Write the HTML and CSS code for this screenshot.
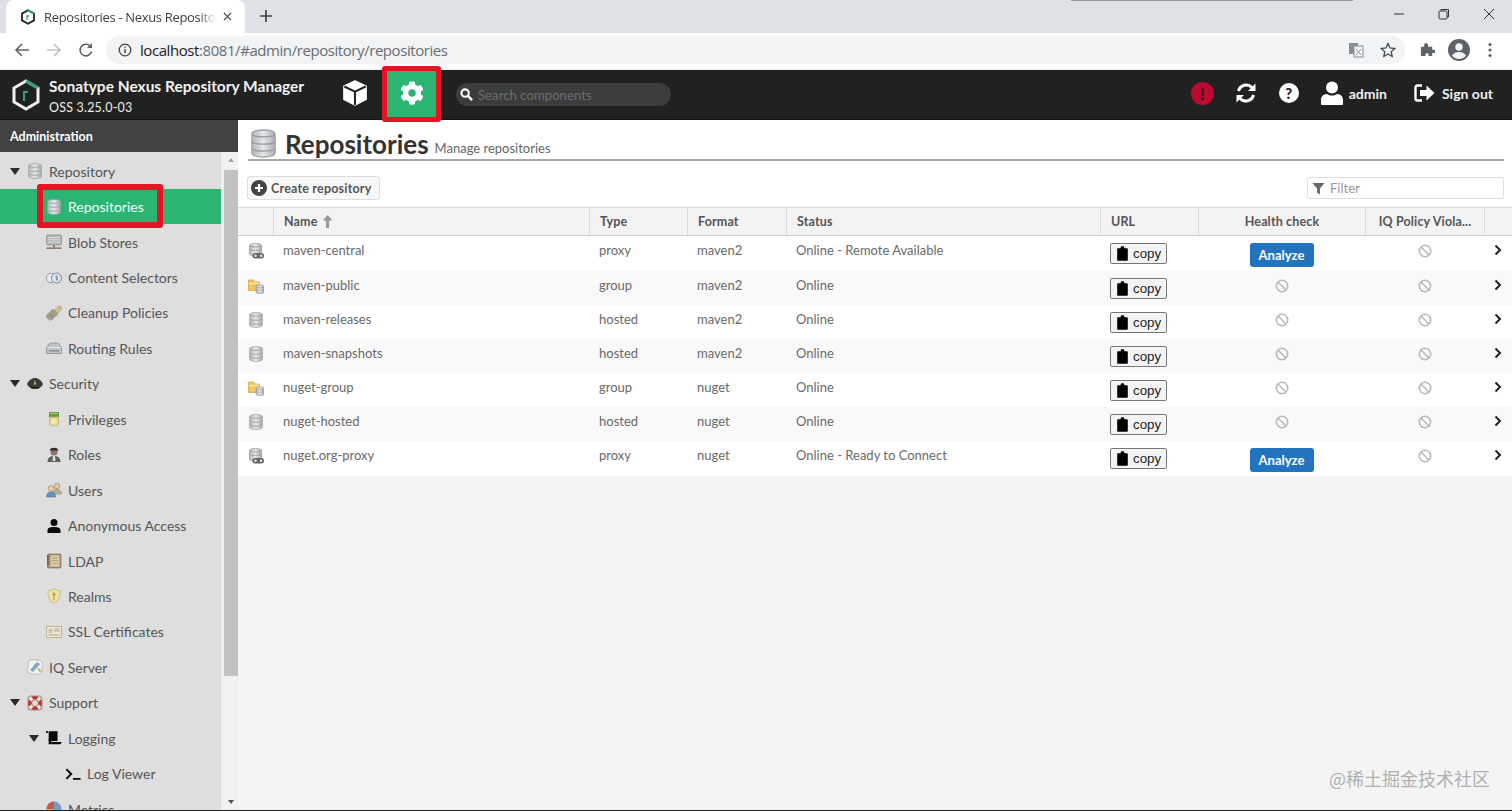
FILE: index.html
```html
<!DOCTYPE html>
<html lang="en">
<head>
<meta charset="utf-8">
<title>Repositories - Nexus Repository Manager</title>
<link rel="stylesheet" href="styles.css">
</head>
<body>
<svg class="defs" aria-hidden="true">
  <defs>
    <linearGradient id="gdb" x1="0" x2="1" y1="0" y2="0"><stop offset="0" stop-color="#b4b8ba"/><stop offset=".5" stop-color="#e4e6e7"/><stop offset="1" stop-color="#a9adb0"/></linearGradient>
    <symbol id="i-db" viewBox="1.5 .5 13 15"><path d="M2 3.2C2 1.6 5 1 8 1s6 .6 6 2.2v9.600C14 14.400 11 15 8 15s-6-.6-6-2.200z" fill="url(#gdb)" stroke="#a0a4a6" stroke-width=".7"/><path d="M2 3.200C3 5 13 5 14 3.200M2 7c1 1.800 11 1.800 12 0M2 10.600c1 1.800 11 1.800 12 0" fill="none" stroke="#979b9e" stroke-width=".7"/></symbol>
    <symbol id="i-proxy" viewBox="0 0 16 16"><path d="M1.500 2.600C1.500 1.300 4.500.4 7.500.4s6 .9 6 2.200V11c0 1.300-3 2.200-6 2.200s-6-.9-6-2.200z" fill="url(#gdb)" stroke="#8f9396" stroke-width=".7"/><path d="M1.500 2.800c1 1.500 11 1.500 12 0M1.500 6.300c1 1.500 11 1.500 12 0" fill="none" stroke="#8f9396" stroke-width=".7"/><rect x="4.500" y="10" width="11.500" height="5.500" rx="2.700" fill="#63666a"/><circle cx="7.500" cy="12.700" r="1.300" fill="#ddd"/><circle cx="13" cy="12.700" r="1.300" fill="#ddd"/></symbol>
    <symbol id="i-group" viewBox="0 0 16 16"><path d="M.5 2V12.500h11V4H6.500L5.500 2z" fill="#f0c75e" stroke="#d0a23a" stroke-width=".7"/><path d="M1 5.500h10" stroke="#fbe9ae" stroke-width="1.500"/><path d="M8 8.500C8 7.500 9.500 7 12 7s4 .5 4 1.500v5.500c0 1-1.500 1.500-4 1.500s-4-.5-4-1.500z" fill="url(#gdb)" stroke="#8f9396" stroke-width=".6"/><path d="M8 9c1 1 7 1 8 0M8 11.500c1 1 7 1 8 0" fill="none" stroke="#8f9396" stroke-width=".5"/></symbol>
    <symbol id="i-blob" viewBox="0 0 16 16"><rect x=".5" y="1" width="15" height="10" rx="1.500" fill="#b5b8ba" stroke="#85888a" stroke-width=".7"/><path d="M2 3.500h12M2 5.700h12M2 8h12" stroke="#e3e5e6" stroke-width=".8"/><path d="M8 11v2.500" stroke="#666" stroke-width="1.500"/><path d="M.5 14.200h15" stroke="#8a7b55" stroke-width="1.500"/></symbol>
    <symbol id="i-sel" viewBox="0 0 16 16"><circle cx="5" cy="8" r="4.700" fill="#e9e9e9" stroke="#9a9a9a"/><circle cx="10.500" cy="8" r="5" fill="#dde4ec" stroke="#7d8a99"/><path d="M9.500 5.500h2.200l.4 5H10z" fill="#8a9bb0"/></symbol>
    <symbol id="i-brush" viewBox="0 0 16 16"><path d="M.5 10.500 7 4l5 5-6.500 6C3 15.500.5 13.500.5 10.500z" fill="#a79f8a" stroke="#807a68" stroke-width=".5"/><path d="M2.500 12 6 8.500M4.500 13.500 8 10" stroke="#7f7a68" stroke-width=".7"/><path d="M9 5l4-4.500 3 2.500-3.500 5z" fill="#d2bd8f" stroke="#9a8a66" stroke-width=".5"/></symbol>
    <symbol id="i-route" viewBox="0 0 16 16"><path d="M2.500 5C3 3.500 4.500 3 8 3s5 .5 5.500 2L15.500 7.500v6H.5v-6z" fill="#bfc4c7" stroke="#85898c" stroke-width=".8"/><path d="M1 7.500h14" stroke="#e6e8e9"/><path d="M3 10.800h10" stroke="#7d8184" stroke-width="1.200"/></symbol>
    <symbol id="i-sec" viewBox="0 0 16 16"><path d="M0 8C1.500 4.200 5 2 8 2s6.500 2.200 8 6c-1 2.800-4 5-8 5s-7-2.200-8-5z" fill="#3d3d36"/><path d="M8 4l1.200 4.500H6.800z" fill="#d6bd6c"/><path d="M3 11h10l-1.500 1.500h-7z" fill="#1f1f1c"/></symbol>
    <symbol id="i-medal" viewBox="0 0 16 16"><path d="M3 1h10v5H3z" fill="#6c9a3f"/><path d="M4 2.500h8" stroke="#a9c77f"/><path d="M3.500 6h9v6.500C12.500 14 10.500 15 8 15s-4.500-1-4.500-2.500z" fill="#e2d38f" stroke="#bca95f" stroke-width=".6"/><circle cx="8" cy="10.500" r="2.800" fill="#f1e7b5"/></symbol>
    <symbol id="i-officer" viewBox="0 0 16 16"><circle cx="8" cy="5" r="3.500" fill="#8c7464"/><path d="M3.500 3.500C4 1.500 6 .8 8 .8s4 .7 4.500 2.700z" fill="#30302e"/><path d="M1.500 15c0-4 2.500-6 6.500-6s6.500 2 6.500 6z" fill="#5c5e60"/><path d="M7 9h2l.5 5h-3z" fill="#e0e0e0"/></symbol>
    <symbol id="i-users" viewBox="0 0 16 16"><circle cx="11" cy="4" r="2.800" fill="#e9c9a5" stroke="#8e7a60" stroke-width=".6"/><path d="M7 12c0-3 1.500-4.500 4-4.500s4.500 1.500 4.500 4.500z" fill="#b7b28c" stroke="#7d7a60" stroke-width=".5"/><circle cx="5" cy="6.500" r="2.800" fill="#eed0ad" stroke="#8e7a60" stroke-width=".6"/><path d="M.5 15c0-3.500 1.500-5 4.500-5s4.500 1.500 4.500 5z" fill="#5f8fc9" stroke="#3e6898" stroke-width=".5"/></symbol>
    <symbol id="i-person" viewBox="0 0 16 16"><circle cx="8" cy="4.500" r="3.500" fill="#0a0a0a"/><path d="M1.500 15v-2.500C1.500 10 3.500 9 8 9s6.500 1 6.500 3.500V15z" fill="#0a0a0a"/></symbol>
    <symbol id="i-book" viewBox="0 0 16 16"><rect x="1.500" y="1" width="13.500" height="14" rx="1" fill="#a98f6c" stroke="#75613f" stroke-width=".6"/><rect x="4.500" y="2.200" width="9" height="11.600" fill="#d9c9a8"/><path d="M6 5h6M6 7.500h6M6 10h6" stroke="#a8926f" stroke-width=".7"/><path d="M1 3.500h2M1 6h2M1 8.500h2M1 11h2" stroke="#4a3d28"/></symbol>
    <symbol id="i-shield" viewBox="0 0 16 16"><path d="M8 .8c2 1.500 4 2 6 2 0 6-1 10-6 12.400C3 12.800 2 8.800 2 2.800c2 0 4-.5 6-2z" fill="#efe2a8" stroke="#c4ad62" stroke-width=".7"/><path d="M8 4v8M6 6.500h4" stroke="#b89a3f" stroke-width="1.200"/></symbol>
    <symbol id="i-cert" viewBox="0 0 16 16"><rect x=".5" y="2.500" width="15" height="11" fill="#efe6d0" stroke="#b5a78b" stroke-width=".8"/><rect x="2.500" y="5" width="4" height="4" fill="#c9c3b0"/><path d="M8 5h5.500M8 7h5.500M2.500 11h11" stroke="#8f8a7d" stroke-width=".7"/></symbol>
    <symbol id="i-iq" viewBox="0 0 16 16"><rect x="1" y="1" width="14" height="14" rx="3" transform="rotate(8 8 8)" fill="#f0f0f0" stroke="#aaa" stroke-width=".6"/><path d="M3 11 10 3l3 2-7 8z" fill="#7fa7c8"/><path d="M11 9l2.500 4" stroke="#d1aa3d" stroke-width="1.500"/></symbol>
    <symbol id="i-buoy" viewBox="0 0 16 16"><rect x=".3" y=".3" width="15.400" height="15.400" rx="3.500" fill="#b5aaa2"/><circle cx="8" cy="8" r="7" fill="#c23b32"/><path d="M2.900 2.900 5.700 5.700M13.100 2.900 10.300 5.700M2.900 13.100 5.700 10.300M13.100 13.100 10.300 10.300" stroke="#f6f2ec" stroke-width="3"/><circle cx="8" cy="8" r="3.400" fill="#dedede" stroke="#a8322a" stroke-width=".6"/></symbol>
    <symbol id="i-scroll" viewBox="0 0 18 16"><path d="M0 0h2v2.500H0zM3 .5h10v11H3z" fill="#0a0a0a"/><path d="M6 12.500h11.500c0 1.500-.8 2.500-2 2.500H6z" fill="#0a0a0a"/><path d="M3 9h3v6H3z" fill="#0a0a0a"/></symbol>
    <symbol id="i-term" viewBox="0 0 18 14"><path d="M1.500 1.500 7 7l-5.500 5.500" fill="none" stroke="#0a0a0a" stroke-width="2.200"/><path d="M9 12.500h8.500" stroke="#0a0a0a" stroke-width="2"/></symbol>
    <symbol id="i-pie" viewBox="0 0 16 16"><circle cx="8" cy="8" r="7.500" fill="#6f9fc6"/><path d="M8 8V.5A7.500 7.500 0 0 0 .5 8z" fill="#c9594c"/><path d="M8 8H.5A7.500 7.500 0 0 0 8 15.500z" fill="#d2b04c"/></symbol>
    <symbol id="i-clip" viewBox="0 0 11 15"><path d="M1.200 2.200h2.500V1.400C3.700.7 4.300.2 5.500.2s1.800.5 1.800 1.200v.8h2.500c.6 0 1 .4 1 1v10.600c0 .6-.4 1-1 1H1.200c-.6 0-1-.4-1-1V3.200c0-.6.4-1 1-1z" fill="#000"/></symbol>
    <symbol id="i-ban" viewBox="0 0 14 14"><circle cx="7" cy="7" r="5.700" fill="none" stroke="#b9b9b9" stroke-width="1.600"/><path d="M3 3l8 8" stroke="#b9b9b9" stroke-width="1.600"/></symbol>
    <symbol id="i-chev" viewBox="0 0 8 12"><path d="M1.500 1.500 6 6l-4.500 4.500" fill="none" stroke="#222" stroke-width="2"/></symbol>
  </defs>
</svg>

<div class="browser-tabs">
  <div class="tab">
    <svg class="fav" viewBox="0 0 16 16"><path d="M8 1.200 14 4.600v6.800L8 14.800 2 11.400V4.600z" fill="none" stroke="#222" stroke-width="1.800"/><path d="M8 1.200 14 4.600" fill="none" stroke="#2aa874" stroke-width="1.800"/><path d="M7 11V7h2" fill="none" stroke="#2aa874" stroke-width="1.300"/></svg>
    <span class="tab-title">Repositories - Nexus Repository Manager</span>
    <svg class="tab-x" viewBox="0 0 10 10"><path d="M1 1l8 8M9 1l-8 8" stroke="#444" stroke-width="1.400"/></svg>
  </div>
  <svg class="new-tab" viewBox="0 0 12 12"><path d="M6 0v12M0 6h12" stroke="#3c4043" stroke-width="1.700"/></svg>
  <div class="win-ctrl">
    <svg class="win-btn" viewBox="0 0 12 12"><path d="M1 6h10" stroke="#333" stroke-width="1"/></svg>
    <svg class="win-btn" viewBox="0 0 12 12"><rect x="1" y="3" width="8" height="8" rx="1" fill="none" stroke="#333"/><path d="M3 3V1.500h7.500V9H9" fill="none" stroke="#333"/></svg>
    <svg class="win-btn" viewBox="0 0 12 12"><path d="M1 1l10 10M11 1L1 11" stroke="#333" stroke-width="1"/></svg>
  </div>
</div>

<div class="browser-bar">
  <svg class="nav-ico" viewBox="0 0 16 16"><path d="M15 8H2M8 2 2 8l6 6" fill="none" stroke="#5f6368" stroke-width="1.600"/></svg>
  <svg class="nav-ico" viewBox="0 0 16 16"><path d="M1 8h13M8 2l6 6-6 6" fill="none" stroke="#c0c2c5" stroke-width="1.600"/></svg>
  <svg class="nav-ico" viewBox="0 0 16 16"><path d="M13.500 9.500A5.800 5.800 0 1 1 12 4" fill="none" stroke="#5f6368" stroke-width="1.600"/><path d="M14 1v5H9z" fill="#5f6368"/></svg>
  <div class="omnibox">
    <svg class="info" viewBox="0 0 14 14"><circle cx="7" cy="7" r="5.800" fill="none" stroke="#444" stroke-width="1.300"/><path d="M7 6v4.200M7 3.500v1.300" stroke="#444" stroke-width="1.400"/></svg>
    <span class="url"><span class="url-host">localhost</span>:8081/#admin/repository/repositories</span>
    <svg class="omni-ico" viewBox="0 0 16 16"><rect x="1" y="1" width="9" height="11" fill="#8b8f93"/><rect x="6" y="4" width="9" height="11" fill="#f1f3f4" stroke="#8b8f93"/><path d="M8 7l5 6M13 7l-5 6" stroke="#9a9ea2"/></svg>
    <svg class="omni-ico star" viewBox="0 0 16 16"><path d="M8 1.500 10 6l4.800.5-3.600 3.200 1 4.800L8 12 3.800 14.500l1-4.800L1.200 6.500 6 6z" fill="none" stroke="#4a4d50" stroke-width="1.300"/></svg>
  </div>
  <svg class="bar-ico" viewBox="0 0 16 16"><path d="M1 5h3.500C4 2.500 5 1 6.500 1S9 2.500 8.500 5H13v3.500c2.500-.5 3-.2 3 1.500s-.5 2-3 1.500V15H9c.5-2 0-3-1.500-3S5.500 13 6 15H1z" fill="#5f6368"/></svg>
  <svg class="avatar" viewBox="0 0 22 22"><circle cx="11" cy="11" r="11" fill="#5f6368"/><circle cx="11" cy="8" r="3.700" fill="#f1f3f4"/><path d="M4 16.500c1.500-2.500 4-3.500 7-3.500s5.500 1 7 3.500C16.500 18.500 14 20 11 20s-5.500-1.500-7-3.500z" fill="#f1f3f4"/></svg>
  <svg class="dots" viewBox="0 0 4 16"><circle cx="2" cy="2.500" r="1.600" fill="#5f6368"/><circle cx="2" cy="8" r="1.600" fill="#5f6368"/><circle cx="2" cy="13.500" r="1.600" fill="#5f6368"/></svg>
</div>

<header class="topbar">
  <svg class="logo" viewBox="0 0 28 32"><path d="M14 2 26 9v14l-12 7L2 23V9z" fill="none" stroke="#f2f2f2" stroke-width="3"/><path d="M14 2 26 9" fill="none" stroke="#2aa874" stroke-width="3"/><path d="M12 22v-9h4" fill="none" stroke="#2aa874" stroke-width="2"/></svg>
  <div class="brand">
    <div class="brand-name">Sonatype Nexus Repository Manager</div>
    <div class="brand-ver">OSS 3.25.0-03</div>
  </div>
  <svg class="cube" viewBox="0 0 26 28"><path d="M13 1 25 6.500V21L13 27 1 21V6.500z" fill="#fff" stroke="#fff" stroke-linejoin="round" stroke-width="1.500"/><path d="M1.500 7 13 12.500 24.500 7M13 12.500V27" fill="none" stroke="#222" stroke-width="2.200"/></svg>
  <div class="admin-btn">
    <svg class="gear" viewBox="0 0 512 512"><path fill="#fff" d="M487.4 315.7l-42.6-24.6c4.300-23.200 4.300-47 0-70.200l42.600-24.600c4.900-2.800 7.100-8.600 5.500-14-11.100-35.600-30-67.800-54.700-94.600-3.800-4.100-10-5.100-14.800-2.300L380.800 110c-17.900-15.400-38.500-27.300-60.800-35.100V25.800c0-5.600-3.900-10.500-9.400-11.700-36.700-8.200-74.300-7.800-109.200 0-5.500 1.200-9.400 6.100-9.400 11.700V75c-22.200 7.900-42.800 19.800-60.800 35.100L88.700 85.500c-4.900-2.800-11-1.900-14.800 2.300-24.700 26.700-43.600 58.900-54.700 94.600-1.700 5.400.6 11.200 5.500 14L67.300 221c-4.300 23.200-4.300 47 0 70.200l-42.600 24.600c-4.900 2.800-7.100 8.600-5.500 14 11.100 35.600 30 67.800 54.700 94.600 3.800 4.100 10 5.100 14.800 2.300l42.600-24.600c17.900 15.400 38.500 27.300 60.800 35.100v49.200c0 5.600 3.900 10.500 9.400 11.700 36.700 8.200 74.300 7.800 109.200 0 5.500-1.200 9.400-6.100 9.400-11.700v-49.200c22.200-7.900 42.800-19.800 60.800-35.100l42.600 24.600c4.900 2.800 11 1.900 14.800-2.300 24.700-26.700 43.600-58.900 54.700-94.600 1.500-5.500-.7-11.300-5.600-14.100zM256 336c-44.100 0-80-35.900-80-80s35.900-80 80-80 80 35.900 80 80-35.900 80-80 80z"/></svg>
  </div>
  <div class="search">
    <svg class="search-ico" viewBox="0 0 14 14"><circle cx="5.500" cy="5.500" r="4" fill="none" stroke="#fff" stroke-width="2.200"/><path d="M8.500 8.500 13 13" stroke="#fff" stroke-width="2.600"/></svg>
    <span class="search-ph">Search components</span>
  </div>
  <div class="top-right">
    <span class="alert">!</span>
    <svg class="refresh" viewBox="0 0 22 22"><path d="M3.500 9A8 8 0 0 1 17 5.500" fill="none" stroke="#fff" stroke-width="3"/><path d="M20.500 1.500V9h-7.500z" fill="#fff"/><path d="M18.500 13A8 8 0 0 1 5 16.500" fill="none" stroke="#fff" stroke-width="3"/><path d="M1.500 20.500V13H9z" fill="#fff"/></svg>
    <span class="help">?</span>
    <svg class="user-ico" viewBox="0 0 22 24"><circle cx="11" cy="6.500" r="6" fill="#fff"/><path d="M0 23v-4c0-4 3-6 6-6 1.500 1 3 1.500 5 1.500s3.500-.5 5-1.500c3 0 6 2 6 6v4c0 .5-.5 1-1 1H1c-.5 0-1-.5-1-1z" fill="#fff"/></svg>
    <span class="top-text user-name">admin</span>
    <svg class="out-ico" viewBox="0 0 21 18"><path d="M8 1.500H3.500C2.300 1.500 1.500 2.300 1.500 3.500v11c0 1.200.8 2 2 2H8" fill="none" stroke="#fff" stroke-width="2.400"/><path d="M6 6h6.500V1.500L20.500 9l-8 7.500V12H6z" fill="#fff"/></svg>
    <span class="top-text">Sign out</span>
  </div>
</header>

<div class="workspace">
  <aside class="sidebar">
    <div class="side-head">Administration</div>
    <div class="side-body">
      <nav class="tree">
        <div class="node lv0"><span class="tw"></span><svg class="ni"><use href="#i-db"/></svg><span>Repository</span></div>
        <div class="node lv1 active"><span class="tw none"></span><svg class="ni"><use href="#i-db"/></svg><span>Repositories</span></div>
        <div class="node lv1"><span class="tw none"></span><svg class="ni"><use href="#i-blob"/></svg><span>Blob Stores</span></div>
        <div class="node lv1"><span class="tw none"></span><svg class="ni"><use href="#i-sel"/></svg><span>Content Selectors</span></div>
        <div class="node lv1"><span class="tw none"></span><svg class="ni"><use href="#i-brush"/></svg><span>Cleanup Policies</span></div>
        <div class="node lv1"><span class="tw none"></span><svg class="ni"><use href="#i-route"/></svg><span>Routing Rules</span></div>
        <div class="node lv0"><span class="tw"></span><svg class="ni"><use href="#i-sec"/></svg><span>Security</span></div>
        <div class="node lv1"><span class="tw none"></span><svg class="ni"><use href="#i-medal"/></svg><span>Privileges</span></div>
        <div class="node lv1"><span class="tw none"></span><svg class="ni"><use href="#i-officer"/></svg><span>Roles</span></div>
        <div class="node lv1"><span class="tw none"></span><svg class="ni"><use href="#i-users"/></svg><span>Users</span></div>
        <div class="node lv1"><span class="tw none"></span><svg class="ni"><use href="#i-person"/></svg><span>Anonymous Access</span></div>
        <div class="node lv1"><span class="tw none"></span><svg class="ni"><use href="#i-book"/></svg><span>LDAP</span></div>
        <div class="node lv1"><span class="tw none"></span><svg class="ni"><use href="#i-shield"/></svg><span>Realms</span></div>
        <div class="node lv1"><span class="tw none"></span><svg class="ni"><use href="#i-cert"/></svg><span>SSL Certificates</span></div>
        <div class="node lv0"><span class="tw none"></span><svg class="ni"><use href="#i-iq"/></svg><span>IQ Server</span></div>
        <div class="node lv0"><span class="tw"></span><svg class="ni"><use href="#i-buoy"/></svg><span>Support</span></div>
        <div class="node lv1"><span class="tw"></span><svg class="ni"><use href="#i-scroll"/></svg><span>Logging</span></div>
        <div class="node lv2"><span class="tw none"></span><svg class="ni"><use href="#i-term"/></svg><span>Log Viewer</span></div>
        <div class="node lv1"><span class="tw none"></span><svg class="ni"><use href="#i-pie"/></svg><span>Metrics</span></div>
      </nav>
      <div class="scrollbar">
        <span class="sb-up"></span>
        <span class="sb-thumb"></span>
        <span class="sb-down"></span>
      </div>
    </div>
  </aside>

  <main class="content">
    <div class="title-wrap">
      <div class="title-row">
        <svg class="title-ico"><use href="#i-db"/></svg>
        <h1>Repositories</h1>
        <span class="subtitle">Manage repositories</span>
      </div>
    </div>
    <div class="toolbar">
      <button class="create-btn">
        <svg class="plus" viewBox="0 0 16 16"><circle cx="8" cy="8" r="8" fill="#444"/><path d="M8 4v8M4 8h8" stroke="#fff" stroke-width="2.200"/></svg>
        Create repository
      </button>
      <div class="filter">
        <svg class="filter-ico" viewBox="0 0 14 14"><path d="M.5 1h13L8.500 7v6.500l-3-2V7z" fill="#666"/></svg>
        <span>Filter</span>
      </div>
    </div>
    <div class="grid">
      <div class="cols head">
        <div class="hc"></div>
        <div class="hc">Name <svg class="sort" viewBox="0 0 10 12"><path d="M5 0l4.500 5H6.500v7h-3V5H.5z" fill="#999"/></svg></div>
        <div class="hc">Type</div>
        <div class="hc">Format</div>
        <div class="hc">Status</div>
        <div class="hc">URL</div>
        <div class="hc center">Health check</div>
        <div class="hc center">IQ Policy Viola...</div>
        <div class="hc"></div>
      </div>

      <div class="cols row tall">
        <div class="c"><svg class="ri"><use href="#i-proxy"/></svg></div><div class="c">maven-central</div><div class="c">proxy</div><div class="c">maven2</div><div class="c">Online - Remote Available</div>
        <div class="c"><button class="copy"><svg class="clip"><use href="#i-clip"/></svg>copy</button></div>
        <div class="c center"><button class="analyze">Analyze</button></div>
        <div class="c center"><svg class="ban"><use href="#i-ban"/></svg></div>
        <div class="c"><svg class="chev"><use href="#i-chev"/></svg></div>
      </div>
      <div class="cols row alt">
        <div class="c"><svg class="ri"><use href="#i-group"/></svg></div><div class="c">maven-public</div><div class="c">group</div><div class="c">maven2</div><div class="c">Online</div>
        <div class="c"><button class="copy"><svg class="clip"><use href="#i-clip"/></svg>copy</button></div>
        <div class="c center"><svg class="ban"><use href="#i-ban"/></svg></div>
        <div class="c center"><svg class="ban"><use href="#i-ban"/></svg></div>
        <div class="c"><svg class="chev"><use href="#i-chev"/></svg></div>
      </div>
      <div class="cols row">
        <div class="c"><svg class="ri"><use href="#i-db"/></svg></div><div class="c">maven-releases</div><div class="c">hosted</div><div class="c">maven2</div><div class="c">Online</div>
        <div class="c"><button class="copy"><svg class="clip"><use href="#i-clip"/></svg>copy</button></div>
        <div class="c center"><svg class="ban"><use href="#i-ban"/></svg></div>
        <div class="c center"><svg class="ban"><use href="#i-ban"/></svg></div>
        <div class="c"><svg class="chev"><use href="#i-chev"/></svg></div>
      </div>
      <div class="cols row alt">
        <div class="c"><svg class="ri"><use href="#i-db"/></svg></div><div class="c">maven-snapshots</div><div class="c">hosted</div><div class="c">maven2</div><div class="c">Online</div>
        <div class="c"><button class="copy"><svg class="clip"><use href="#i-clip"/></svg>copy</button></div>
        <div class="c center"><svg class="ban"><use href="#i-ban"/></svg></div>
        <div class="c center"><svg class="ban"><use href="#i-ban"/></svg></div>
        <div class="c"><svg class="chev"><use href="#i-chev"/></svg></div>
      </div>
      <div class="cols row">
        <div class="c"><svg class="ri"><use href="#i-group"/></svg></div><div class="c">nuget-group</div><div class="c">group</div><div class="c">nuget</div><div class="c">Online</div>
        <div class="c"><button class="copy"><svg class="clip"><use href="#i-clip"/></svg>copy</button></div>
        <div class="c center"><svg class="ban"><use href="#i-ban"/></svg></div>
        <div class="c center"><svg class="ban"><use href="#i-ban"/></svg></div>
        <div class="c"><svg class="chev"><use href="#i-chev"/></svg></div>
      </div>
      <div class="cols row alt">
        <div class="c"><svg class="ri"><use href="#i-db"/></svg></div><div class="c">nuget-hosted</div><div class="c">hosted</div><div class="c">nuget</div><div class="c">Online</div>
        <div class="c"><button class="copy"><svg class="clip"><use href="#i-clip"/></svg>copy</button></div>
        <div class="c center"><svg class="ban"><use href="#i-ban"/></svg></div>
        <div class="c center"><svg class="ban"><use href="#i-ban"/></svg></div>
        <div class="c"><svg class="chev"><use href="#i-chev"/></svg></div>
      </div>
      <div class="cols row tall">
        <div class="c"><svg class="ri"><use href="#i-proxy"/></svg></div><div class="c">nuget.org-proxy</div><div class="c">proxy</div><div class="c">nuget</div><div class="c">Online - Ready to Connect</div>
        <div class="c"><button class="copy"><svg class="clip"><use href="#i-clip"/></svg>copy</button></div>
        <div class="c center"><button class="analyze">Analyze</button></div>
        <div class="c center"><svg class="ban"><use href="#i-ban"/></svg></div>
        <div class="c"><svg class="chev"><use href="#i-chev"/></svg></div>
      </div>
    </div>
  </main>
</div>

<!-- items lying over the page -->
<span class="mark mark-admin"></span>
<span class="mark mark-repos"></span>
<span class="window-edge"></span>
<span class="watermark">@稀土掘金技术社区</span>
</body>
</html>
```
FILE: styles.css
```css
* { box-sizing: border-box; }
html, body { margin: 0; height: 811px; overflow: hidden; }
body { position: relative; width: 1512px; background: #f4f4f4; font-family: Lato, "Open Sans", sans-serif; color: #555; }
.defs { position: absolute; width: 0; height: 0; }

/* browser chrome */
.browser-tabs { display: flex; align-items: flex-start; height: 33px; background: #dee1e6; padding-left: 6px; }
.tab { display: flex; align-items: center; width: 239px; height: 33px; padding-left: 14px; background: #fff; border-radius: 8px 8px 0 0; flex: none; }
.fav { width: 16px; height: 16px; flex: none; }
.tab-title { width: 172px; margin-left: 8px; overflow: hidden; white-space: nowrap; font: 13px "Open Sans", sans-serif; letter-spacing: -.32px; color: #3c4043; -webkit-mask-image: linear-gradient(90deg, #000 90%, transparent); mask-image: linear-gradient(90deg, #000 90%, transparent); }
.tab-x { width: 9px; height: 9px; margin-left: 7px; flex: none; }
.new-tab { width: 12px; height: 12px; margin: 10px 0 0 15px; flex: none; }
.win-ctrl { display: flex; gap: 33px; margin: 8px 0 0 auto; padding-right: 17px; }
.win-btn { width: 12px; height: 12px; }
.browser-bar { display: flex; align-items: center; height: 37px; background: #fff; padding: 0 0 3px 14px; border-bottom: 1px solid #eee; }
.nav-ico { width: 16px; height: 16px; margin-right: 16px; flex: none; }
.omnibox { display: flex; align-items: center; width: 1299px; height: 28px; margin-left: -4px; padding: 0 9px 0 12px; background: #f1f3f4; border-radius: 14px; flex: none; }
.info { width: 14px; height: 14px; flex: none; }
.url { margin-left: 8px; font: 15px "Open Sans", sans-serif; color: #6a6d70; letter-spacing: -.43px; }
.url-host { color: #202124; }
.omni-ico { width: 16px; height: 16px; margin-left: auto; flex: none; }
.omni-ico.star { margin-left: 16px; }
.bar-ico { width: 15px; height: 15px; margin-left: 15px; flex: none; }
.avatar { width: 22px; height: 22px; margin-left: 13px; flex: none; }
.dots { width: 4px; height: 16px; margin-left: 18px; flex: none; }

/* Nexus top bar */
.topbar { display: flex; align-items: center; height: 50px; background: #212121; color: #fff; padding: 0 0 3px 12px; border-bottom: 1px solid #111; }
.logo { width: 28px; height: 32px; margin-top: 3px; flex: none; }
.brand { width: 293px; margin-left: 9px; padding-top: 7px; flex: none; }
.brand-name { font-size: 15.500px; font-weight: 700; line-height: 19px; color: #f2f2f2; }
.brand-ver { font-size: 12.500px; line-height: 18px; margin-top: 3px; color: #eee; letter-spacing: .2px; }
.cube { width: 26px; height: 26px; flex: none; }
.admin-btn { display: flex; align-items: center; justify-content: center; width: 49px; height: 50px; margin: 0 0 -3px 19px; padding-bottom: 3px; background: #2bb573; flex: none; }
.gear { width: 24px; height: 24px; }
.search { display: flex; align-items: center; width: 215px; height: 23px; margin: 3px 0 0 20px; padding-left: 4px; background: #3c3c3c; border-radius: 12px; flex: none; }
.search-ico { width: 13px; height: 13px; flex: none; }
.search-ph { margin-left: 5px; font-size: 13px; color: #6e6e6e; letter-spacing: .1px; }
.top-right { display: flex; align-items: center; margin-left: auto; padding-right: 19px; }
.alert { display: block; width: 23px; height: 23px; border-radius: 50%; background: #bb0a30; color: #2e1a1e; font-weight: 900; font-size: 17px; line-height: 23px; text-align: center; }
.refresh { width: 22px; height: 22px; margin-left: 21px; flex: none; }
.help { display: block; width: 20px; height: 20px; margin-left: 22px; border-radius: 50%; background: #fff; color: #212121; font-weight: 900; font-size: 15px; line-height: 20px; text-align: center; }
.user-ico { width: 22px; height: 24px; margin-left: 22px; flex: none; }
.top-text { font-size: 14px; font-weight: 700; color: #f0f0f0; }
.user-name { margin-left: 6px; }
.out-ico { width: 21px; height: 18px; margin: 0 7px 0 27px; flex: none; }

/* layout */
.workspace { display: flex; height: 691px; border-bottom: 1px solid #222; }
.sidebar { display: flex; flex-direction: column; width: 238px; flex: none; background: #dedede; }
.side-head { height: 32px; padding-left: 10px; background: #424242; color: #fff; font-size: 12.500px; font-weight: 700; line-height: 33px; }
.side-body { display: flex; flex: 1; min-height: 0; }
.tree { width: 222px; flex: none; padding-top: 1.500px; overflow: hidden; font-size: 14px; color: #555; border-right: 1px solid #ececec; }
.node { display: flex; align-items: center; height: 35.450px; white-space: nowrap; }
.lv0 { padding-left: 10px; }
.lv1 { padding-left: 29px; }
.lv2 { padding-left: 48px; }
.tw { width: 17px; flex: none; }
.tw::before { content: ""; display: block; width: 0; height: 0; border: 5px solid transparent; border-top: 7px solid #2a2a2a; border-bottom: 0; }
.tw.none::before { display: none; }
.ni { width: 16px; height: 16px; margin-right: 6px; flex: none; }
.active { background: #2bb573; color: #f2fff8; }
.scrollbar { display: flex; flex-direction: column; flex: 1; background: #f1f1f1; padding: 0 0 0 2px; }
.sb-up { height: 18px; flex: none; position: relative; }
.sb-up::before { content: ""; position: absolute; left: 4px; top: 6px; border: 3.500px solid transparent; border-bottom: 4px solid #a3a3a3; border-top: 0; }
.sb-thumb { height: 506px; flex: none; background: #c1c1c1; }
.sb-down { margin-top: auto; height: 14px; position: relative; }
.sb-down::before { content: ""; position: absolute; left: 4px; top: 4px; border: 3.500px solid transparent; border-top: 4px solid #505050; border-bottom: 0; }

.content { flex: 1; min-width: 0; display: flex; flex-direction: column; }
.title-wrap { height: 41px; background: #fff; padding: 0 8px 0 10px; flex: none; }
.title-row { display: flex; align-items: flex-end; height: 41px; border-bottom: 2px solid #a9a9a9; }
.title-ico { width: 29px; height: 29px; margin: 9px 7px 0 1px; flex: none; align-self: flex-start; }
.content h1 { margin: 0 6px -2px 0; font-size: 26px; font-weight: 700; line-height: 34px; color: #333; }
.subtitle { font-size: 13px; line-height: 16px; margin-bottom: 3px; color: #666; }
.toolbar { display: flex; align-items: flex-start; justify-content: space-between; height: 46px; flex: none; padding: 15px 8px 0 9px; background: #fff; }
.create-btn { display: flex; align-items: center; gap: 4px; width: 133px; height: 24px; padding: 0 0 0 3px; background: #f8f8f8; border: 1px solid #ddd; border-radius: 3px; font: 700 12.500px Lato, sans-serif; letter-spacing: .2px; color: #555; }
.plus { width: 16px; height: 16px; flex: none; }
.filter { display: flex; align-items: center; width: 197px; height: 22px; padding-left: 4px; margin-top: 1px; background: #fff; border: 1px solid #ddd; border-radius: 3px; font-size: 13px; color: #999; }
.filter-ico { width: 13px; height: 13px; margin-right: 5px; flex: none; }
.grid { background: #fff; }
.cols { display: grid; grid-template-columns: 35px 316px 98px 99px 314px 98px 167px 119px 28px; }
.head { height: 29px; background: #f3f3f3; border-top: 1px solid #d8d8d8; border-bottom: 1px solid #ccc; }
.hc { display: flex; align-items: center; gap: 4px; padding-left: 10px; font-size: 12.500px; font-weight: 700; letter-spacing: .15px; color: #555; white-space: nowrap; }
.hc + .hc { border-left: 1px solid #d9d9d9; }
.hc.center { justify-content: center; padding: 0; }
.sort { width: 11px; height: 13px; }
.row { height: 34px; background: #fff; font-size: 13px; line-height: 16px; color: #6a6a6a; }
.tall { height: 35px; }
.alt { background: #f9f9f9; }
.c { padding: 6px 0 0 10px; }
.c.center { display: flex; justify-content: center; padding-left: 0; }
.ri { display: block; width: 16px; height: 16px; margin-top: 1px; }
.copy { display: flex; align-items: center; width: 57px; height: 21px; margin: 1px 0 0; padding: 0 0 0 6px; background: #f4f4f4; border: 1px solid #777; border-radius: 2px; font: 13.300px "Liberation Sans", Arial, sans-serif; color: #222; }
.clip { width: 11px; height: 15px; margin-right: 5px; flex: none; }
.analyze { width: 64px; height: 24px; margin: 1px 0 0; padding: 0; background: #2374c0; border: 0; border-radius: 3px; font: 700 13px Lato, sans-serif; color: #fff; }
.ban { display: block; width: 14px; height: 14px; margin-top: 2px; }
.chev { display: block; width: 8px; height: 12px; margin-top: 2px; }

/* overlays */
.mark { position: absolute; border: 5px solid #e81224; border-radius: 3px; }
.mark-admin { left: 382px; top: 66px; width: 59px; height: 56px; }
.mark-repos { left: 37px; top: 184px; width: 126px; height: 44px; border-width: 6px; }
.window-edge { position: absolute; left: 1071px; top: 0; width: 282px; height: 1px; background: #9a9a9a; }
.watermark { position: absolute; left: 1329px; top: 767px; font: 18px "Noto Sans CJK SC", sans-serif; line-height: 22px; color: #b0b0b0; }
```
